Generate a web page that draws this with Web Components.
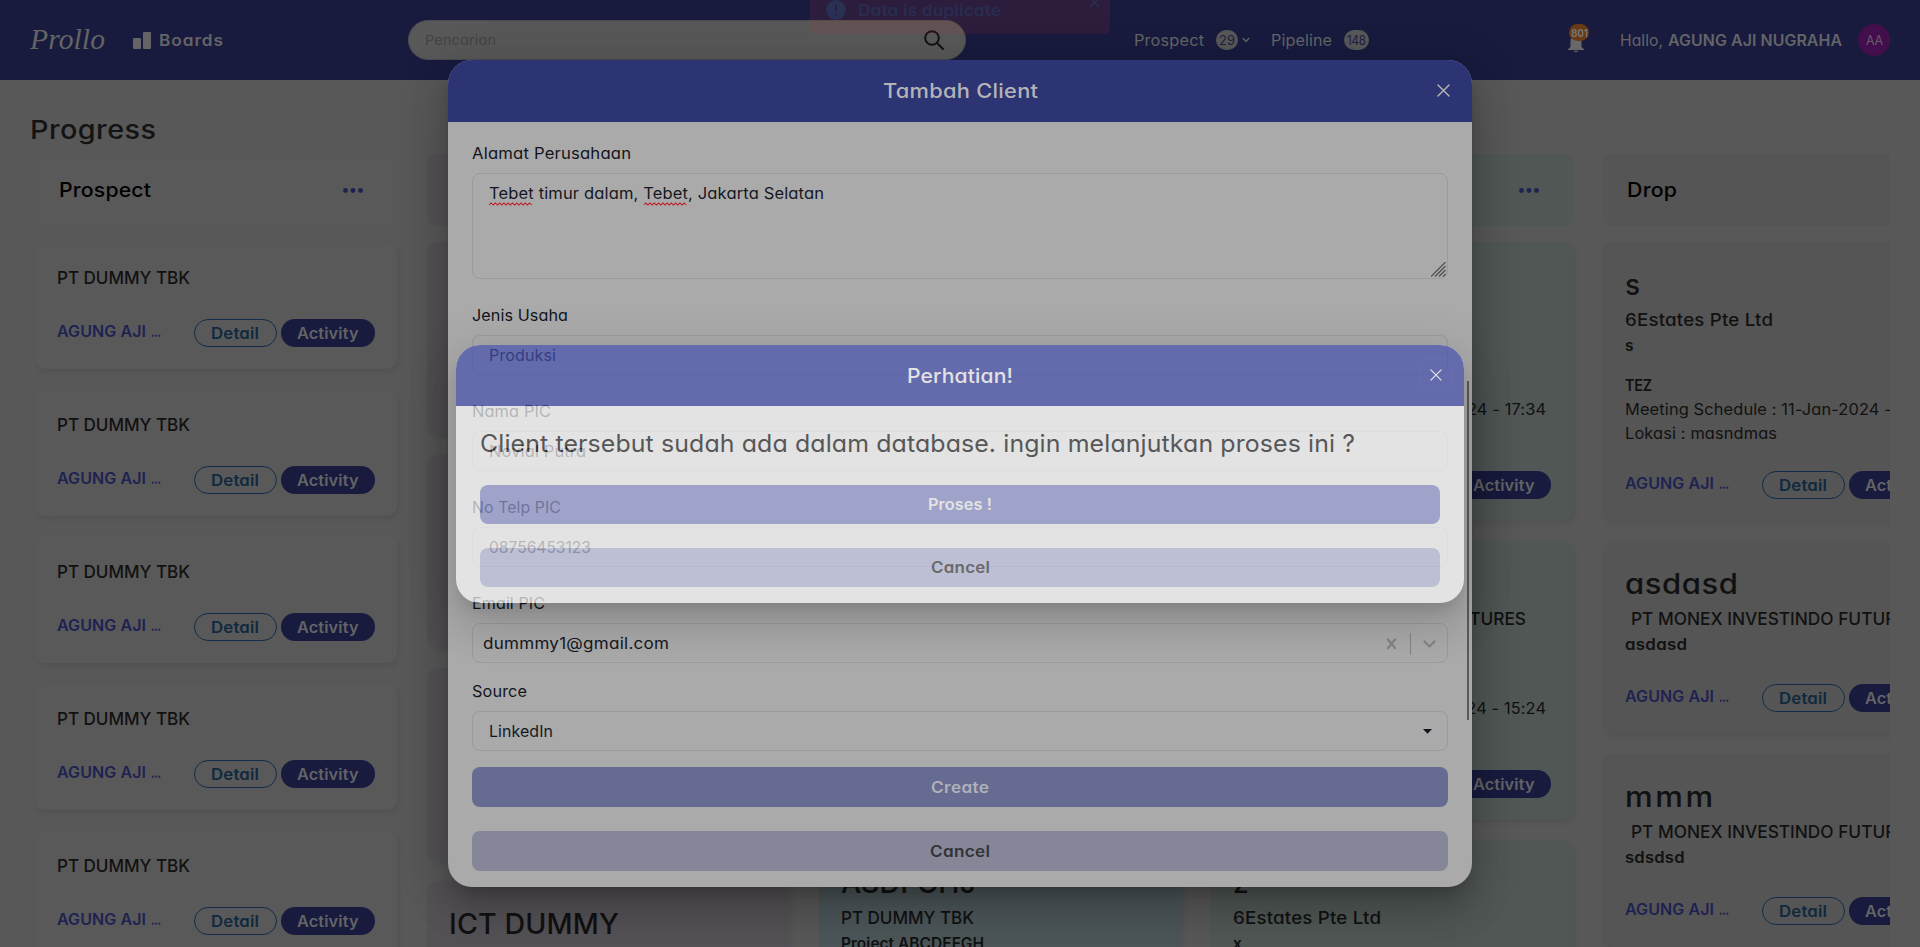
<!DOCTYPE html>
<html lang="id">
<head>
<meta charset="utf-8">
<title>Prollo</title>
<style>
html,body{margin:0;height:100%;overflow:hidden;background:#585858}
body{font-family:Inter,"Open Sans",sans-serif;font-feature-settings:"cv11";font-size:15.5px;color:#111}
</style>
</head>
<body>
<prollo-app></prollo-app>
<script>
const make = (host, html) => { host.attachShadow({mode:'open'}).innerHTML = html; };
const define = (name, render) => customElements.define(name, class extends HTMLElement {
  connectedCallback(){ if(!this.shadowRoot) make(this, render(this)); }
});

/* Inline text that widens its letters, then tracks them, to fill a given advance width. */
customElements.define('fit-text', class extends HTMLElement {
  connectedCallback(){
    if(this.shadowRoot) return;
    make(this, `<style>:host{display:inline-block;white-space:pre;flex:none}span{display:inline-block;transform-origin:0 50%}</style><span><slot></slot></span>`);
    queueMicrotask(() => this.fit());
  }
  fit(){
    const s = this.shadowRoot.querySelector('span'), w = +this.getAttribute('w');
    const n = this.textContent.length;
    if(!w || n < 2) return;
    const nat = s.getBoundingClientRect().width;
    const k = Math.min(1.11, Math.pow(w / nat, .8));
    const ls = (w / k - nat) / (n - 1);
    s.style.letterSpacing = ls + 'px';
    s.style.transform = `scaleX(${k})`;
    this.style.width = w + 'px';
  }
});

define('search-box', () => `<style>
:host{display:flex;box-sizing:border-box;width:558px;height:40px;border-radius:20px;background:#585858;border:1px solid #4c4c4f;align-items:center;justify-content:space-between;padding:0 20px 0 16px;color:#434346;font-size:13.6px}
svg{display:block}</style>
<fit-text w="71">Pencarian</fit-text>
<svg width="22" height="22" viewBox="0 0 22 22" fill="none" stroke="#101012" stroke-width="1.9" stroke-linecap="round"><circle cx="9" cy="9" r="6.8"/><path d="M14 14l6 6"/></svg>`);

define('count-badge', () => `<style>
:host{display:flex;height:20px;box-sizing:border-box;border-radius:10px;background:#585858;color:#1b1e42;align-items:center;justify-content:center;font-size:12.5px}
</style><slot></slot>`);

define('app-header', () => `<style>
:host{display:flex;height:80px;background:#181b3e;align-items:center;color:#646466;box-sizing:border-box;padding:0 30px}
.logo{font:italic 29px "Liberation Serif",serif;margin-right:28px;margin-top:-2px}
.bars{margin-right:8px;display:block;margin-top:1px}
.b{font-weight:600;margin-right:185px}
.grow{flex:1}
count-badge{margin-left:12px}
.chev{margin:0 21px 0 4px}
.bell{position:relative;width:22px;height:32px;margin-right:30px}
.bell svg{position:absolute;left:0;top:10px}
.bell b{position:absolute;left:1px;top:0;width:20px;height:17px;border-radius:9px;background:#693a13;color:#777;font-size:11px;display:flex;align-items:center;justify-content:center;font-weight:600}
.n{font-weight:600}
.av{width:32px;height:32px;border-radius:50%;background:#420f4c;color:#68596b;display:flex;align-items:center;justify-content:center;margin-left:16px;font-size:13px}
</style>
<span class="logo"><fit-text w="75">Prollo</fit-text></span>
<svg class="bars" width="18" height="18" viewBox="0 0 18 18" fill="#646466"><rect x="0" y="6" width="8" height="11" rx="1"/><rect x="10" y="0" width="8" height="17" rx="1"/></svg>
<fit-text class="b" w="64">Boards</fit-text>
<search-box></search-box>
<span style="width:168px"></span>
<fit-text w="70">Prospect</fit-text><count-badge style="width:22px"><fit-text w="16">29</fit-text></count-badge>
<svg class="chev" width="8" height="6" viewBox="0 0 8 6" fill="none" stroke="#646466" stroke-width="1.4"><path d="M.8 1l3.2 3.4L7.2 1"/></svg>
<fit-text w="61">Pipeline</fit-text><count-badge style="width:25px"><fit-text w="19">148</fit-text></count-badge>
<span class="grow"></span>
<span class="bell"><svg width="16" height="18" viewBox="0 0 16 18" fill="#68686a"><path d="M2.5 13V6.5a5.5 5.500 0 0 1 11 0V13L16 15.300v.7H0v-.7zM6 16.800h4a2 1.500 0 0 1-4 0z"/></svg><b><fit-text w="17">801</fit-text></b></span>
<fit-text w="43">Hallo,</fit-text><fit-text class="n" style="margin-left:5px" w="174">AGUNG AJI NUGRAHA</fit-text>
<span class="av"><fit-text w="17">AA</fit-text></span>`);

define('toast-note', () => `<style>
:host{position:absolute;left:810px;top:-26px;width:300px;height:60px;border-radius:5px;background:rgba(190,50,58,.12);color:#282d50;display:flex;align-items:center;box-sizing:border-box;padding:11px 10px 0 16px;font-weight:600;font-size:16px}
.x{margin-left:auto;margin-top:-15px}
fit-text{margin-left:12px}
</style><svg width="20" height="20" viewBox="0 0 20 20"><circle cx="10" cy="10" r="10" fill="#283054"/><path d="M10 5v6.200M10 13.400v2" stroke="#2a1f40" stroke-width="2"/></svg>
<fit-text w="143">Data is duplicate</fit-text>
<svg class="x" width="11" height="11" viewBox="0 0 11 11" stroke="#2e3154" stroke-width="1.2"><path d="M1 1l9 9M10 1l-9 9"/></svg>`);

const WIDTHS = {'asdasd':113,'mmm':88,'ICT DUMMY':170,'ASDFGHJ':135,
 'PT DUMMY TBK':133,'6Estates Pte Ltd':148,'PT MONEX INVESTINDO FUTURES':287};
const SUBW = {'asdasd':62,'sdsdsd':59.5,'Project ABCDEFGH':143};

define('deal-card', el => {
  const a = k => el.getAttribute(k), big = a('head'), sub = a('sub');
  return `<style>
:host{display:flex;flex-direction:column;flex:none;box-sizing:border-box;border-radius:10px;background:var(--tint);padding:${big!==null?23:21}px 22px 22px;box-shadow:2px 3px 5px rgba(0,0,0,.07);white-space:nowrap}
div{display:flex;align-items:center;flex:none}
.h{height:40px;font-size:28px;font-weight:500}
.s{height:29px;font-size:17.3px;font-weight:500}
.i{height:22px;font-size:15.5px;font-weight:600}
.m{height:24px;font-size:15.5px}
.foot{height:28px;margin-top:auto}
.who{width:114px;color:#1d2252;font-weight:600;margin-top:-3px;flex:none;display:flex}
.who fit-text+fit-text{margin-left:5px}
.pill{box-sizing:border-box;height:28px;border-radius:14px;justify-content:center;font-weight:600;font-size:15.5px;flex:none}
.d{width:83px;margin:0 4px 0 22.500px;border:1px solid #122c4a;color:#10293f}
.a{width:94px;background:#181b3e;color:#646466}
</style>` + (!sub ? '' : `
${big!==null?`<div class="h"><fit-text w="${WIDTHS[big]||0}">${big}</fit-text></div>`:''}
<div class="s" style="${sub.startsWith('PT MONEX')?'padding-left:6px':''}"><fit-text w="${WIDTHS[sub]}">${sub}</fit-text></div>
${a('item')?`<div class="i"><fit-text w="${SUBW[a('item')]||0}">${a('item')}</fit-text></div>`:''}
${a('meet')?`<div class="i" style="height:24px;margin-top:17px"><fit-text w="27">TEZ</fit-text></div><div class="m"><fit-text w="313">Meeting Schedule : ${a('meet')}</fit-text></div><div class="m"><fit-text w="152">Lokasi : masndmas</fit-text></div>`:''}
${a('foot')==='no'?'':`<div class="foot"><span class="who"><fit-text w="89">AGUNG AJI</fit-text><fit-text w="10">...</fit-text></span><div class="pill d"><fit-text w="48">Detail</fit-text></div><div class="pill a"><fit-text w="61.500">Activity</fit-text></div></div>`}`);
});

define('board-column', el => `<style>
:host{display:flex;flex-direction:column;width:362px;flex:none;gap:20px}
.top{height:72px;border-radius:8px;background:var(--tint);margin-bottom:-4px;display:flex;align-items:center;justify-content:space-between;padding:0 34px 0 24px;font-size:20px;font-weight:500;color:#000;flex:none}
</style><div class="top"><fit-text w="${el.getAttribute('w')||0}">${el.getAttribute('label')||''}</fit-text>
<svg width="20" height="5" viewBox="0 0 20 5" fill="#1d2252"><circle cx="2.500" cy="2.500" r="2.400"/><circle cx="10" cy="2.500" r="2.400"/><circle cx="17.500" cy="2.500" r="2.400"/></svg></div><slot></slot>`);

define('progress-board', () => {
  const c = (h, attrs = '') => `<deal-card style="height:${h}px" ${attrs}></deal-card>`;
  return `<style>
:host{display:block;height:867px;overflow:hidden;margin-right:30px}
h1{margin:0;height:74px;box-sizing:border-box;padding:25px 0 0 30px;font-size:26px;line-height:50px;font-weight:500;color:#131313}
.cols{display:flex;gap:30px;padding-left:35px}
</style><h1><fit-text w="126">Progress</fit-text></h1>
<div class="cols">
<board-column label="Prospect" w="92" style="--tint:#595959">${c(127,'sub="PT DUMMY TBK"').repeat(5)}</board-column>
<board-column style="--tint:#555257">${c(193).repeat(3)}${c(193,'head="ICT DUMMY" sub="PT DUMMY TBK" foot="no"')}</board-column>
<board-column style="--tint:#4c5659">${c(279).repeat(2)}${c(279,'head="ASDFGHJ" sub="PT DUMMY TBK" item="Project ABCDEFGH" foot="no"')}</board-column>
<board-column style="--tint:#505755">${c(279,'head="s" sub="6Estates Pte Ltd" item="s" meet="11-Jan-2024 - 17:34"')}${c(279,'head="s" sub="PT MONEX INVESTINDO FUTURES" item="s" meet="11-Jan-2024 - 15:24"')}${c(279,'head="z" sub="6Estates Pte Ltd" item="x" foot="no"')}</board-column>
<board-column label="Drop" w="50" style="--tint:#555">${c(279,'head="s" sub="6Estates Pte Ltd" item="s" meet="11-Jan-2024 - 17:34"')}${c(193,'head="asdasd" sub="PT MONEX INVESTINDO FUTURES" item="asdasd"')}${c(193,'head="mmm" sub="PT MONEX INVESTINDO FUTURES" item="sdsdsd"')}</board-column>
</div>`;
});

define('form-field', el => `<style>
:host{display:block;margin-top:26px}
.l{height:21px;margin-bottom:9px;display:flex;align-items:center;color:#13151d}
.b{height:40px;box-sizing:border-box;border:1px solid #9a9aa1;border-radius:8px;padding:0 16px;display:flex;align-items:center;color:#15181f;position:relative}
:host([tall]) .b{height:106px;align-items:flex-start;padding-top:10px}
:host([combo]) .b{padding-left:10px}
</style><div class="l"><fit-text w="${el.getAttribute('w')}">${el.getAttribute('label')}</fit-text></div><div class="b"><slot></slot></div>`);

define('wide-button', () => `<style>
:host{display:flex;align-items:center;justify-content:center;border-radius:8px;font-weight:600;height:40px;font-size:15.5px}
</style><slot></slot>`);

const cross = (s, w, c) => `<svg width="${s}" height="${s}" viewBox="0 0 12 12" stroke="${c}" stroke-width="${w}" stroke-linecap="round"><path d="M.9.9l10.200 10.200M11.100.9L.9 11.100"/></svg>`;

define('client-modal', () => `<style>
:host{position:absolute;left:448px;top:60px;width:1024px;height:827px;border-radius:24px;overflow:hidden;background:#aaa;box-shadow:0 11px 15px -7px rgba(0,0,0,.2),0 24px 38px 3px rgba(0,0,0,.14),0 9px 46px 8px rgba(0,0,0,.12)}
header{height:62px;background:#2c3474;color:#b4b4b6;font-size:20px;font-weight:500;display:flex;align-items:center;justify-content:center;position:relative}
.x{position:absolute;right:22px;top:24px;display:flex}
main{padding:0 24px}
form-field:first-child{margin-top:21px}
u{text-decoration:none;position:relative}
u svg{position:absolute;left:0;bottom:-3px}
.grip{position:absolute;right:1px;bottom:1px}
.combo{position:absolute;right:11px;top:8px}
.bar{position:absolute;right:3px;top:321px;width:2px;height:339px;background:#5a5a5a}
</style>
<header><fit-text w="155">Tambah Client</fit-text><span class="x">${cross(13,1.3,'#b4b4b6')}</span></header>
<main>
<form-field tall label="Alamat Perusahaan" w="159"><fit-text w="335"><u>Tebet<svg width="42" height="4"><path class="q" d="" fill="none" stroke="#c01820"/></svg></u> timur dalam, <u>Tebet<svg width="42" height="4"><path class="q" d="" fill="none" stroke="#c01820"/></svg></u>, Jakarta Selatan</fit-text>
<svg class="grip" width="15" height="15" viewBox="0 0 15 15" stroke="#4c4c4c" stroke-width="1.100"><path d="M0 14.500L14.500 0M4 14.500L14.500 4M8 14.500L14.500 8M12 14.500L14.500 12"/></svg></form-field>
<form-field label="Jenis Usaha" w="96"><fit-text w="67">Produksi</fit-text></form-field>
<form-field label="Nama PIC" w="79"><fit-text w="97">Novial Putra</fit-text></form-field>
<form-field label="No Telp PIC" w="89"><fit-text w="102">08756453123</fit-text></form-field>
<form-field combo label="Email PIC" w="73"><fit-text w="186">dummmy1@gmail.com</fit-text>
<svg class="combo" width="50" height="24" viewBox="0 0 50 24" fill="none" stroke="#858588"><path d="M2 7.500l7 8.500M9 7.500L2 16" stroke-width="2.400" stroke-linecap="round"/><path d="M24.500 1v22" stroke-width="1"/><path d="M38.500 9.500l5 5 5-5" stroke-width="2.200" stroke-linecap="round"/></svg></form-field>
<form-field style="margin-top:18px" label="Source" w="55"><fit-text w="64">LinkedIn</fit-text>
<svg style="position:absolute;right:15px;top:17px" width="9" height="5"><path d="M0 0h9L4.500 4.800z" fill="#13151d"/></svg></form-field>
<wide-button style="background:#666c91;color:#b0b1ba;margin-top:16px"><fit-text w="58">Create</fit-text></wide-button>
<wide-button style="background:#858799;color:#333336;margin-top:24px"><fit-text w="60">Cancel</fit-text></wide-button>
</main><span class="bar"></span>`);

define('warning-dialog', () => `<style>
:host{position:absolute;left:456px;top:345px;width:1008px;height:258px;border-radius:24px;overflow:hidden;opacity:.68;background:#fff;box-shadow:0 11px 15px -7px rgba(0,0,0,.2),0 24px 38px 3px rgba(0,0,0,.14),0 9px 46px 8px rgba(0,0,0,.12)}
header{height:61px;background:#424eae;color:#fff;font-size:20px;font-weight:500;display:flex;align-items:center;justify-content:center;position:relative}
.x{position:absolute;right:12px;top:14px;width:30px;height:30px;border:1px solid #4853b2;border-radius:6px;display:flex;align-items:center;justify-content:center}
main{padding:0 24px}
p{margin:0 0 4px;height:75px;display:flex;align-items:center;font-size:24px;color:#303030}
wide-button{height:39px}
</style>
<header><fit-text w="106">Perhatian!</fit-text><span class="x">${cross(12,1.2,'#fff')}</span></header>
<main><p><fit-text w="875">Client tersebut sudah ada dalam database. ingin melanjutkan proses ini ?</fit-text></p>
<wide-button style="background:#9aa1d8;color:#fff"><fit-text w="64">Proses !</fit-text></wide-button>
<wide-button style="background:#c6c9e8;color:#4c4c4c;margin-top:24px"><fit-text w="59">Cancel</fit-text></wide-button></main>`);

define('prollo-app', () => `<style>
:host{display:block;position:relative;width:1920px;height:947px;overflow:hidden}
</style><app-header></app-header><progress-board></progress-board><toast-note></toast-note><client-modal></client-modal><warning-dialog></warning-dialog>`);

/* zigzag of the spell checker */
const modal = document.querySelector('prollo-app').shadowRoot.querySelector('client-modal').shadowRoot;
let z = 'M0 3'; for(let i = 1; i <= 20; i++) z += `L${i*2} ${i%2 ? 1 : 3}`;
modal.querySelectorAll('.q').forEach(p => p.setAttribute('d', z));
</script>
</body>
</html>
